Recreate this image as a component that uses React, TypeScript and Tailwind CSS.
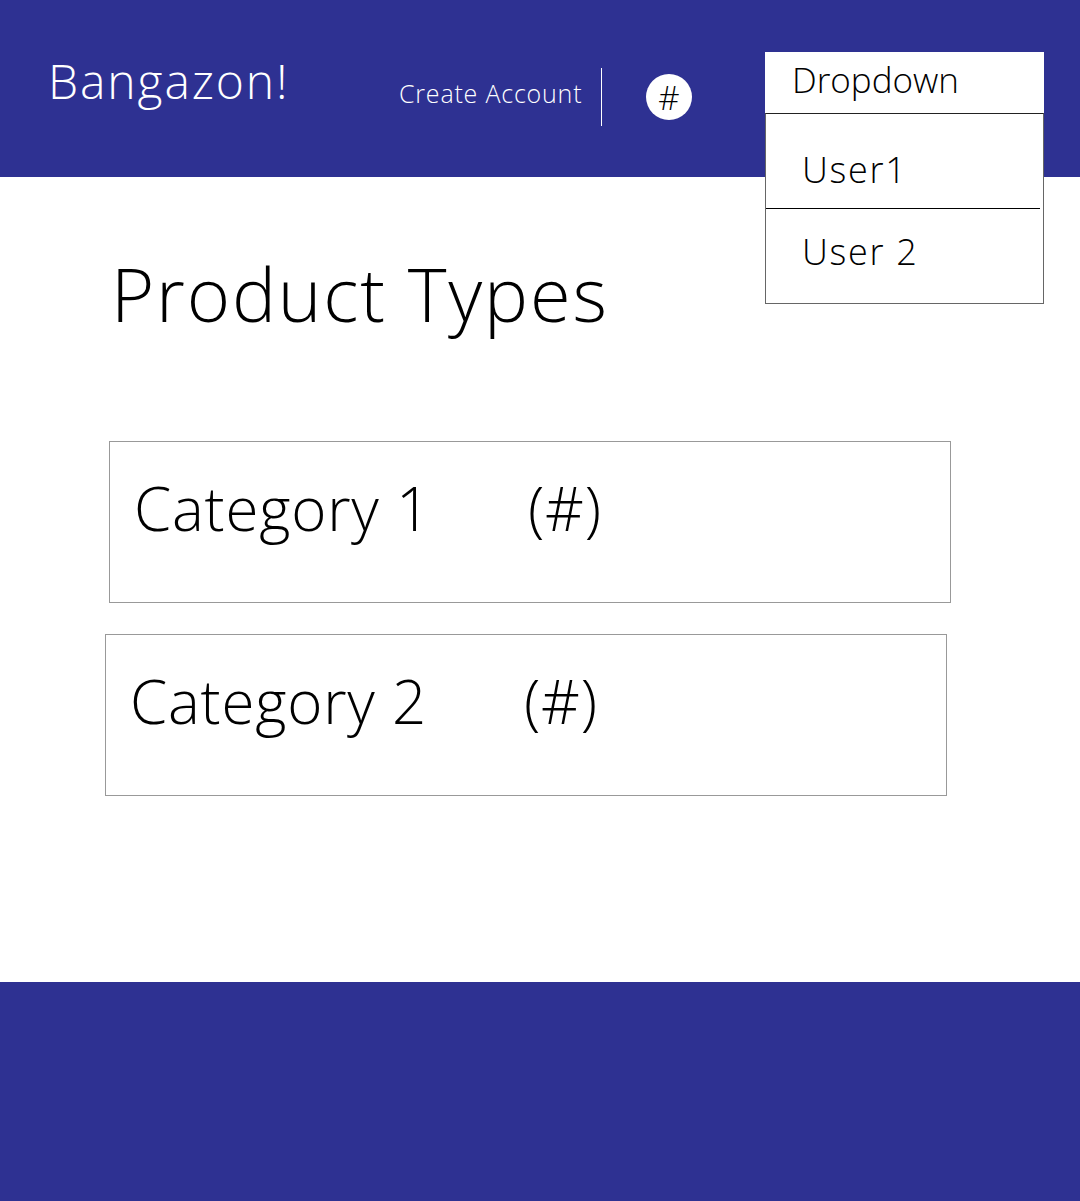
import React from "react";

const font = { fontFamily: '"Open Sans", "Liberation Sans", sans-serif' };

export default function App() {
  return (
    <div className="relative w-[1080px] min-h-[1201px] bg-white font-light" style={font}>
      <header className="relative h-[177px] bg-[#2e3192] flex items-start text-white">
        <div className="ml-[48px] w-[351px] mt-[57px] text-[48px] leading-none tracking-[1.9px]">Bangazon!</div>
        <div className="w-[202px] mt-[81px] text-[25px] leading-none tracking-[0.8px]">Create Account</div>
        <div className="mt-[68px] w-px h-[58px] bg-white" />
        <div className="ml-[44px] mt-[74px] w-[46px] h-[46px] rounded-full bg-white flex items-center justify-center text-black text-[33px] leading-none">
          #
        </div>
      </header>

      <div className="absolute left-[765px] top-[52px] w-[279px] z-10">
        <div className="h-[61px] bg-white pl-[27px] pt-[10px] text-[35px] leading-none text-black">
          Dropdown
        </div>
        <div className="bg-white border border-[#666] border-t-[#222]">
          <div className="h-[95px] pl-[36px] pt-[38px] text-[36px] leading-none tracking-[1.7px] text-black mr-[3px] border-b border-black">
            User1
          </div>
          <div className="h-[94px] pl-[36px] pt-[25px] text-[36px] leading-none tracking-[1.7px] text-black">
            User 2
          </div>
        </div>
      </div>

      <main className="pt-[80px] pb-[186px]">
        <h1 className="ml-[111px] text-[74px] leading-none font-light tracking-[1.8px] text-black">Product Types</h1>
        <div className="mt-[110px] flex flex-col gap-[31px]">
          <div className="ml-[109px] w-[842px] h-[162px] border border-[#999] pt-[36px] pl-[24px] text-[60px] leading-none tracking-[0.8px] text-black flex">
            <span className="w-[394px]">Category 1</span>
            <span>(#)</span>
          </div>
          <div className="ml-[105px] w-[842px] h-[162px] border border-[#999] pt-[36px] pl-[24px] text-[60px] leading-none tracking-[0.8px] text-black flex">
            <span className="w-[394px]">Category 2</span>
            <span>(#)</span>
          </div>
        </div>
      </main>

      <footer className="h-[219px] bg-[#2e3192]" />
    </div>
  );
}
